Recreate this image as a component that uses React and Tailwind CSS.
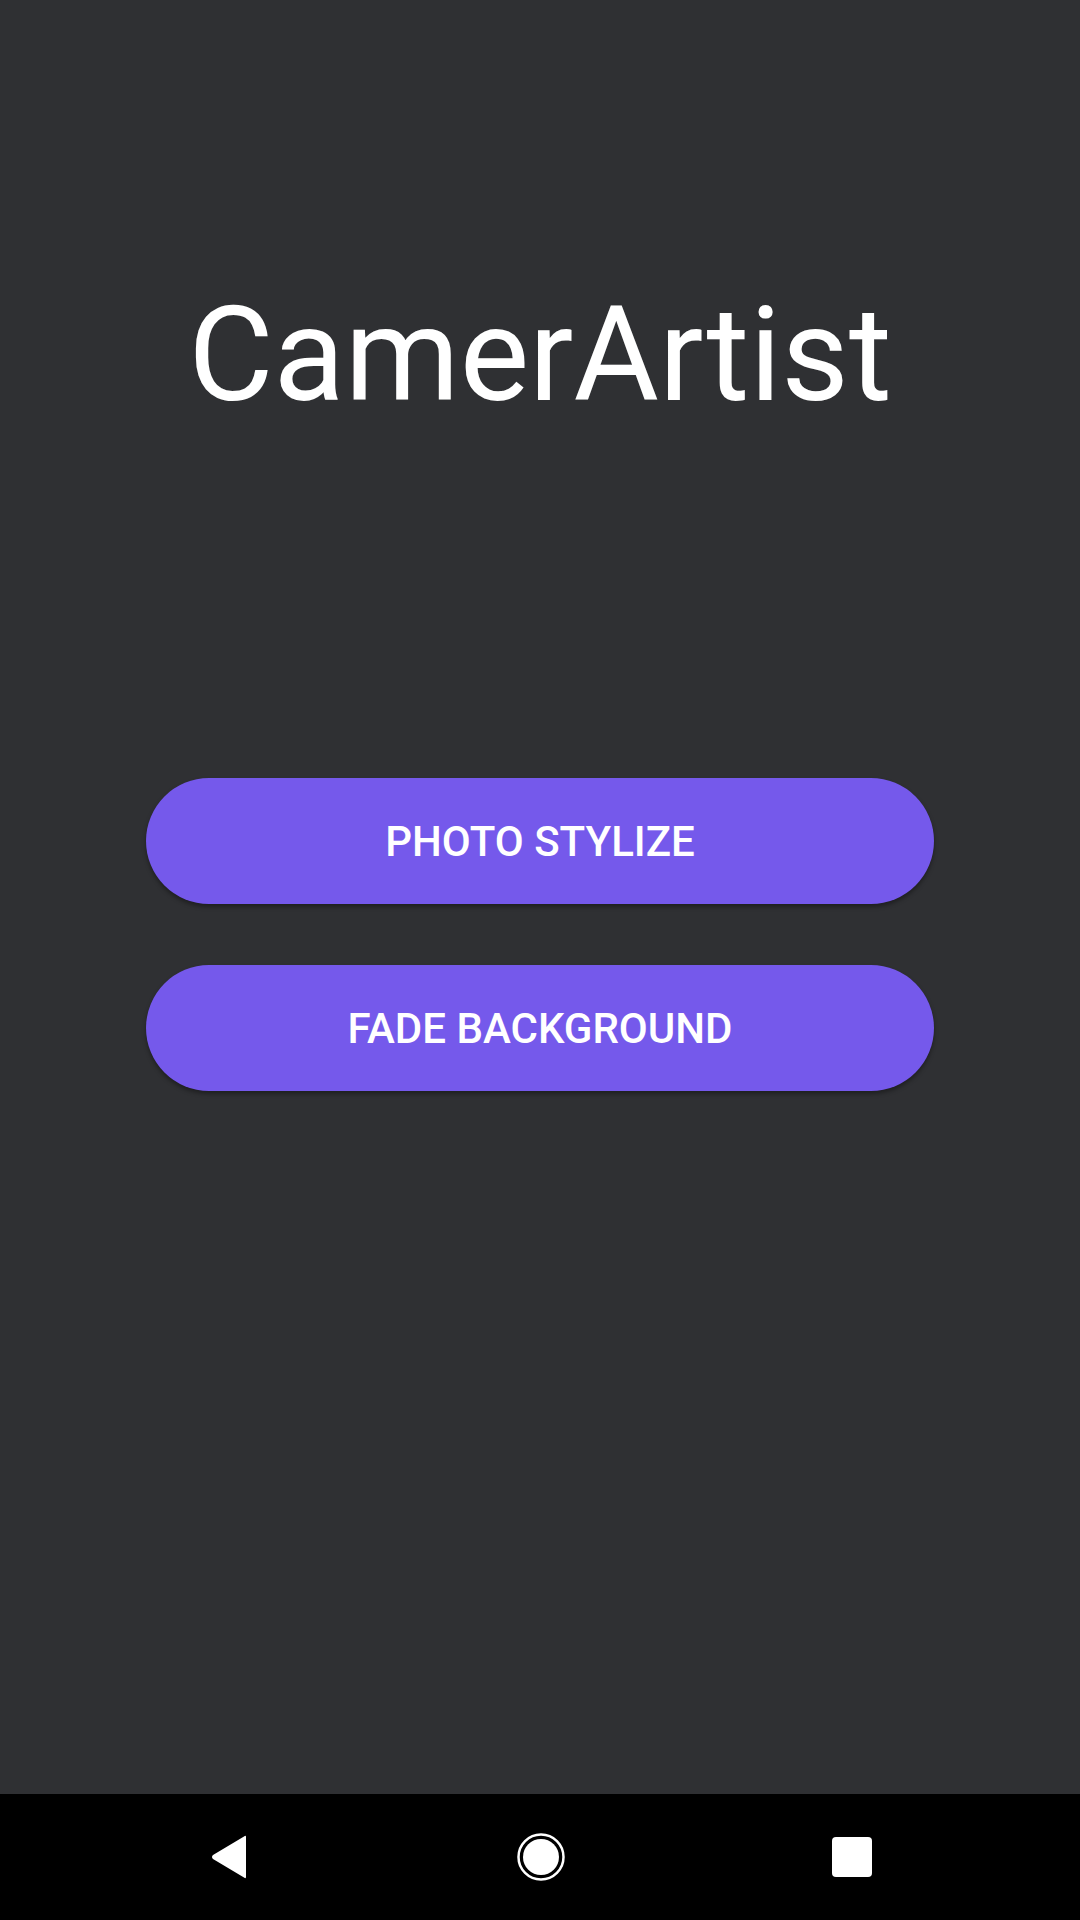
export default function App() {
  return (
    <div className="w-[1080px] h-[1920px] flex flex-col bg-[#2f3033] overflow-hidden" style={{ fontFamily: "Roboto, 'Noto Sans', sans-serif" }}>
      <div className="flex-1 flex flex-col items-center">
        <div className="mt-[290px] h-[131px] text-[131px] leading-none text-white font-normal">CamerArtist</div>
        <div className="mt-[357px] flex flex-col gap-[61px] w-[788px]">
          <button className="h-[126px] w-full rounded-full bg-[#7559eb] text-white text-[42px] font-medium shadow-[0_3px_4px_rgba(0,0,0,0.35)]">
            PHOTO STYLIZE
          </button>
          <button className="h-[126px] w-full rounded-full bg-[#7559eb] text-white text-[42px] font-medium shadow-[0_3px_4px_rgba(0,0,0,0.35)]">
            FADE BACKGROUND
          </button>
        </div>
      </div>
      <div className="h-[126px] bg-black flex items-center justify-center">
        <div className="w-[120px] flex justify-center">
          <svg width="38" height="44" viewBox="0 0 38 44">
            <path d="M36 2 L36 42 Q36 44 34 42.5 L3 24 Q1 22 3 20 L34 1.5 Q36 0 36 2 Z" fill="white" />
          </svg>
        </div>
        <div className="w-[120px] ml-[192px] flex justify-center">
          <svg width="48" height="48" viewBox="0 0 48 48">
            <circle cx="24" cy="24" r="22.5" fill="none" stroke="white" strokeWidth="2.5" />
            <circle cx="24" cy="24" r="18" fill="white" />
          </svg>
        </div>
        <div className="w-[120px] ml-[191px] flex justify-center">
          <div className="w-[40px] h-[40px] bg-white rounded-[4px]"></div>
        </div>
      </div>
    </div>
  );
}
